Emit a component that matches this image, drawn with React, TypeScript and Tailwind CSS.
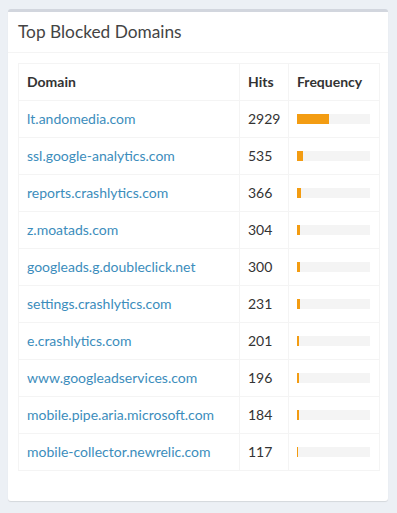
const rows: { domain: string; hits: number }[] = [
  { domain: 'lt.andomedia.com', hits: 2929 },
  { domain: 'ssl.google-analytics.com', hits: 535 },
  { domain: 'reports.crashlytics.com', hits: 366 },
  { domain: 'z.moatads.com', hits: 304 },
  { domain: 'googleads.g.doubleclick.net', hits: 300 },
  { domain: 'settings.crashlytics.com', hits: 231 },
  { domain: 'e.crashlytics.com', hits: 201 },
  { domain: 'www.googleadservices.com', hits: 196 },
  { domain: 'mobile.pipe.aria.microsoft.com', hits: 184 },
  { domain: 'mobile-collector.newrelic.com', hits: 117 },
]

const maxPct = 43.8

export default function App() {
  return (
    <div className="min-h-[513px] bg-[#ecf0f5] pt-[9px] font-['Lato',sans-serif] text-[14px] text-[#333]">
      <div className="mx-2 w-[380px] rounded-[3px] border-t-[3px] border-[#d2d6de] bg-white shadow-[0_1px_1px_rgba(0,0,0,0.1)]">
        <div className="border-b border-[#f4f4f4] p-[10px]">
          <h3 className="text-[17.3px] leading-[20px] text-[#444]">Top Blocked Domains</h3>
        </div>
        <div className="p-[10px]">
          <table className="mb-[20px] w-[361px] table-fixed border-collapse border border-[#f4f4f4]">
            <colgroup>
              <col className="w-[221px]" />
              <col className="w-[49px]" />
              <col className="w-[91px]" />
            </colgroup>
            <thead>
              <tr>
                <th className="border border-[#f4f4f4] px-2 py-2 text-left font-bold leading-[20px]">Domain</th>
                <th className="border border-[#f4f4f4] px-2 py-2 text-left font-bold leading-[20px]">Hits</th>
                <th className="border border-[#f4f4f4] px-2 py-2 text-left font-bold leading-[20px]">Frequency</th>
              </tr>
            </thead>
            <tbody>
              {rows.map((r) => (
                <tr key={r.domain}>
                  <td className="whitespace-nowrap border border-[#f4f4f4] px-2 py-2 leading-[20px] text-[#3c8dbc]">{r.domain}</td>
                  <td className="border border-[#f4f4f4] px-2 py-2 leading-[20px]">{r.hits}</td>
                  <td className="border border-[#f4f4f4] px-2 py-2 leading-[20px]">
                    <div className="h-[10px] w-[73px] bg-[#f4f4f4]">
                      <div className="h-full bg-[#f39c12]" style={{ width: `${(r.hits / 2929) * maxPct}%` }} />
                    </div>
                  </td>
                </tr>
              ))}
            </tbody>
          </table>
        </div>
      </div>
    </div>
  )
}
